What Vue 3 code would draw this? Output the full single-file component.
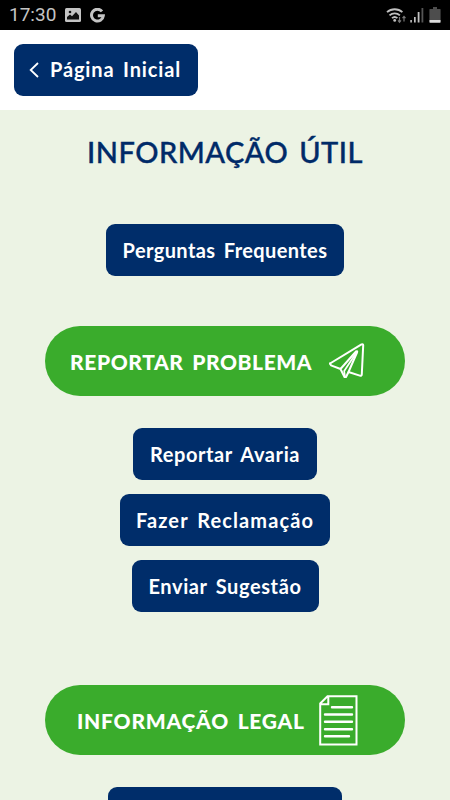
<template>
  <div class="screen">
    <div class="status-bar">
      <span class="clock">17:30</span>
      <svg class="picture" width="16" height="14" viewBox="0 0 16 14">
        <rect width="16" height="14" rx="1.5" fill="#c4c4c4" />
        <path d="M2 11.5V9l3-2.5 2 1.8L11 4l3 3.5v4z" fill="#111" />
        <circle cx="5" cy="4" r="1.3" fill="#111" />
      </svg>
      <svg class="google" width="15" height="15" viewBox="0 0 15 15">
        <path d="M12 3.4A5.9 5.9 0 1 0 13.3 7.8H7.8" fill="none" stroke="#c4c4c4" stroke-width="3" />
      </svg>
      <div class="signals">
        <svg width="22" height="17" viewBox="0 0 22 17">
          <g fill="none" stroke="#c0c0c0" stroke-width="1.8">
            <path d="M1 5.2a11.5 11.5 0 0 1 15.4 0" />
            <path d="M3.5 8.3a7.7 7.7 0 0 1 10.4 0" />
            <path d="M6 11.2a4 4 0 0 1 5.4 0" />
          </g>
          <circle cx="8.7" cy="13.4" r="1.4" fill="#c0c0c0" />
          <path d="M13.5 10v5M12 13.4l1.5 1.8 1.5-1.8M18 14.5v-5M16.5 11.2L18 9.4l1.5 1.8" fill="none" stroke="#777" stroke-width="1.2" />
        </svg>
        <svg class="bars" width="14" height="16" viewBox="0 0 14 16">
          <path d="M.3 13h1.6v2.5H.3zM4 10h1.7v5.5H4zM7.7 5h1.8v10.5H7.7z" fill="#c0c0c0" />
          <path d="M11.5 1h1.8v14.5h-1.8z" fill="#555" />
        </svg>
        <svg class="battery" width="12" height="16" viewBox="0 0 12 16">
          <path d="M4 0h4v2h3q.6 0 .6.6V13H.4V2.6Q.4 2 1 2h3z" fill="#4d4d4d" />
          <path d="M.4 13h11.2v2q0 .7-.6.7H1q-.6 0-.6-.7z" fill="#ddd" />
        </svg>
      </div>
    </div>

    <header class="header">
      <button class="btn btn-back">
        <svg class="chevron" width="10" height="16" viewBox="0 0 10 16">
          <path d="M9 1L1.7 8 9 15" fill="none" stroke="#fff" stroke-width="1.8" />
        </svg>
        <span>Página Inicial</span>
      </button>
    </header>

    <main class="content">
      <h1 class="title">INFORMAÇÃO ÚTIL</h1>

      <button class="btn btn-faq">Perguntas Frequentes</button>

      <div class="banner banner-report">
        <span>REPORTAR PROBLEMA</span>
        <svg class="plane" width="38" height="36" viewBox="0 0 38 36">
          <g fill="none" stroke="#fff" stroke-width="2" stroke-linejoin="round" stroke-linecap="round">
            <path d="M2 20.5L33.5 1.4Q35.3 .6 35.2 2.4L33.8 31.3Q33.6 33.2 31.8 32.6L20.5 29" />
            <path d="M2 20.5L3 22.4 12.5 26 28 8.5Q29.8 7.6 29 9.5L20.5 29 18 34 16.5 34 12.5 26" />
            <path d="M28.8 9L16.2 28 17 34" stroke-width="1.7" />
          </g>
        </svg>
      </div>

      <div class="actions">
        <button v-for="item in actions" :key="item.name" class="btn" :class="item.name">
          {{ item.label }}
        </button>
      </div>

      <div class="banner banner-legal">
        <span>INFORMAÇÃO LEGAL</span>
        <svg class="document" width="39" height="51" viewBox="0 0 39 51">
          <g fill="none" stroke="#fff" stroke-width="2">
            <path d="M1.2 8.5L8.5 1.2H37.5V49.5H1.2zM1.2 9.3H9.3V1.2" />
            <path d="M13 12.3H33M6 19.5H33M6 26.7H33M6 34.2H33M6 41.2H30" stroke-width="2.4" stroke-linecap="round" />
          </g>
        </svg>
      </div>

      <button class="btn btn-next"></button>
    </main>
  </div>
</template>

<script setup>
const actions = [
  { name: 'btn-fault', label: 'Reportar Avaria' },
  { name: 'btn-complaint', label: 'Fazer Reclamação' },
  { name: 'btn-suggestion', label: 'Enviar Sugestão' },
];
</script>

<style>
body { margin: 0; background: #ecf3e4; }
</style>

<style scoped>
.screen {
  width: 450px;
  height: 800px;
  overflow: hidden;
  background: #ecf3e4;
  font-family: Lato, "Liberation Sans", sans-serif;
}

.status-bar {
  display: flex;
  align-items: center;
  height: 30px;
  box-sizing: border-box;
  padding: 0 9px;
  background: #000;
}
.clock {
  width: 47px;
  font: 19px/30px Roboto, sans-serif;
  color: #c4c4c4;
}
.picture { margin-left: 9px; }
.google { margin-left: 9px; }
.signals {
  display: flex;
  align-items: center;
  margin-left: auto;
}
.bars { margin-left: 2px; }
.battery { margin-left: 5px; }

.header {
  display: flex;
  height: 80px;
  box-sizing: border-box;
  padding: 14px;
  background: #fff;
}

.btn {
  display: flex;
  align-items: center;
  justify-content: center;
  flex-shrink: 0;
  height: 52px;
  box-sizing: border-box;
  padding: 0 0 1px;
  border: 0;
  border-radius: 9px;
  background: #002d6a;
  color: #fff;
  font: bold 20px Lato, sans-serif;
  letter-spacing: 0.6px;
  word-spacing: 3px;
  white-space: nowrap;
}
.btn-back {
  justify-content: flex-start;
  width: 184px;
  padding: 0 0 2px 15px;
  letter-spacing: 0.85px;
}
.chevron { margin: 2px 11px 0 0; }

.content {
  display: flex;
  flex-direction: column;
  align-items: center;
}
.title {
  margin: 22px 0 0;
  font-size: 29px;
  line-height: 40px;
  font-weight: 500;
  letter-spacing: 0.5px;
  word-spacing: 3px;
  color: #002a68;
  -webkit-text-stroke: 0.4px #002a68;
  white-space: nowrap;
}
.btn-faq { width: 238px; margin-top: 52px; letter-spacing: 0.4px; }

.banner {
  display: flex;
  align-items: center;
  flex-shrink: 0;
  width: 360px;
  height: 70px;
  box-sizing: border-box;
  border-radius: 35px;
  background: #3aac2c;
  color: #fff;
  font-size: 21px;
  font-weight: 900;
  letter-spacing: 0.6px;
  word-spacing: 3px;
  white-space: nowrap;
}
.banner-report { margin-top: 50px; padding-left: 25px; }
.banner-legal { margin-top: 73px; padding-left: 32px; letter-spacing: 0.75px; }
.banner span { width: 258px; }
.banner-legal span { width: 242px; }

.actions {
  display: flex;
  flex-direction: column;
  align-items: center;
  gap: 14px;
  margin-top: 32px;
}
.btn-fault { width: 184px; }
.btn-complaint { width: 210px; letter-spacing: 1.1px; }
.btn-suggestion { width: 187px; }
.btn-next { width: 234px; margin-top: 32px; }
</style>
